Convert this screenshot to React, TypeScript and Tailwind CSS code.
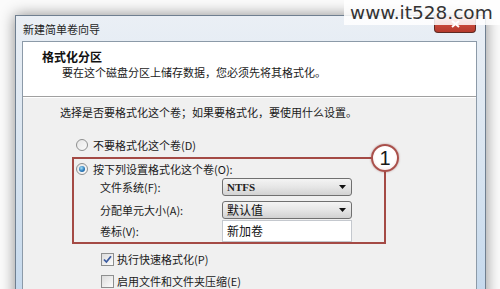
import React from "react";

const cjk = "font-['Noto_Sans_CJK_SC','Liberation_Sans',sans-serif]";

function Radio({ checked }: { checked?: boolean }) {
  return (
    <span className="relative flex h-[12px] w-[12px] shrink-0 items-center justify-center rounded-full border border-[#8e8f8f] bg-gradient-to-br from-[#e6e6e6] to-[#fbfbfb]">
      {checked && (
        <span className="h-[6px] w-[6px] rounded-full bg-[radial-gradient(circle_at_40%_35%,#a9e1f6_0%,#2a7bbd_55%,#1d4f84_100%)]" />
      )}
    </span>
  );
}

function Checkbox({ checked }: { checked?: boolean }) {
  return (
    <span className="flex h-[13px] w-[13px] shrink-0 items-center justify-center border border-[#8e8f8f] bg-gradient-to-br from-[#dcdcdc] to-[#fdfdfd]">
      {checked && (
        <svg width="9" height="9" viewBox="0 0 9 9">
          <path d="M1 4.5 L3.4 7 L8 1.2" fill="none" stroke="#3b5ba0" strokeWidth="1.8" />
        </svg>
      )}
    </span>
  );
}

function Combo({ children, bold }: { children: React.ReactNode; bold?: boolean }) {
  return (
    <div className="flex h-[18px] w-[130px] items-center justify-between rounded-[3px] border border-[#707070] bg-gradient-to-b from-[#f4f4f4] via-[#e6e6e6] to-[#d2d2d2] pl-[4px] pr-[5px]">
      <span
        className={
          bold
            ? "font-['Liberation_Serif',serif] text-[11px] font-bold leading-[14px] text-[#222]"
            : `${cjk} text-[12px] leading-[14px] text-[#111]`
        }
      >
        {children}
      </span>
      <svg width="7" height="4" viewBox="0 0 7 4">
        <path d="M0 0 H7 L3.5 4 Z" fill="#111" />
      </svg>
    </div>
  );
}

export default function App() {
  return (
    <div className="relative h-[289px] w-[500px] overflow-hidden bg-[#fbfbfb]">
      {/* window */}
      <div className="absolute left-[15px] top-[15px] flex h-[300px] w-[471px] flex-col border border-[#6f7f90] bg-gradient-to-b from-[#eaeff5] via-[#d8e4f0] to-[#c2d7ec] pl-[6px] pr-[8px] shadow-[0_0_14px_rgba(0,0,0,0.45)]">
        {/* title bar */}
        <div className={`flex h-[25px] shrink-0 items-center pl-[1px] ${cjk} text-[11px] leading-[14px] text-[#1e1e1e]`}>
          新建简单卷向导
        </div>
        {/* close button */}
        <div className="absolute right-[9px] top-0 flex h-[17px] w-[42px] items-center justify-center rounded-b-[4px] border border-t-0 border-[#5e2a23] bg-gradient-to-b from-[#e8a596] via-[#c8493b] to-[#b63a2c]">
          <svg width="9" height="8" viewBox="0 0 9 8">
            <path d="M1 1 L8 7 M8 1 L1 7" stroke="#fff" strokeWidth="2" />
          </svg>
        </div>
        {/* content */}
        <div className="flex flex-1 flex-col border border-[#8c9aa8] bg-[#f0f0f0]">
          {/* header */}
          <div className="flex h-[55px] shrink-0 flex-col border-b border-[#a0a0a0] bg-white pl-[19px] pt-[7px]">
            <div className={`${cjk} text-[12px] font-bold leading-[16px] text-[#111]`}>格式化分区</div>
            <div className={`${cjk} pl-[20px] text-[11px] leading-[14px] text-[#1a1a1a]`}>
              要在这个磁盘分区上储存数据，您必须先将其格式化。
            </div>
          </div>
          <div className="h-px bg-white" />
          {/* body */}
          <div className={`flex flex-col pl-[37px] pt-[7px] ${cjk} text-[11px] leading-[14px] text-[#1a1a1a]`}>
            <div>选择是否要格式化这个卷；如果要格式化，要使用什么设置。</div>
            <div className="mt-[19px] flex items-center gap-[5px] pl-[16px]">
              <Radio />
              <span>不要格式化这个卷(D)</span>
            </div>
            {/* red box */}
            <div className="relative mt-[5px] ml-[12px] flex h-[87px] w-[314px] flex-col border-2 border-[#a44a45] pl-[2px]">
              <div className="mt-[3px] flex items-center gap-[5px]">
                <Radio checked />
                <span>按下列设置格式化这个卷(O):</span>
              </div>
              <div className="mt-[2px] flex items-center pl-[24px]">
                <span className="w-[122px]">文件系统(F):</span>
                <Combo bold>NTFS</Combo>
              </div>
              <div className="mt-[5px] flex items-center pl-[24px]">
                <span className="w-[122px]">分配单元大小(A):</span>
                <Combo>默认值</Combo>
              </div>
              <div className="mt-[1px] flex items-center pl-[24px]">
                <span className="w-[122px]">卷标(V):</span>
                <div className="flex h-[22px] w-[130px] items-center border border-[#c4c8ce] bg-white pl-[4px] text-[12px] text-[#111]">
                  新加卷
                </div>
              </div>
              {/* callout */}
              <div className="absolute -right-[15px] -top-[15px] flex h-[28px] w-[28px] items-center justify-center rounded-full border-2 border-[#a9504b] bg-[radial-gradient(circle_at_50%_45%,#ffffff_0%,#ffffff_55%,#f3d6d3_100%)] shadow-[0_0_2px_rgba(120,40,40,0.5)]">
                <span className="font-['Liberation_Sans',sans-serif] text-[20px] leading-[20px] text-[#1a1a1a]">1</span>
              </div>
            </div>
            <div className="mt-[8px] flex items-center gap-[3px] pl-[41px]">
              <Checkbox checked />
              <span>执行快速格式化(P)</span>
            </div>
            <div className="mt-[8px] flex items-center gap-[3px] pl-[41px]">
              <Checkbox />
              <span>启用文件和文件夹压缩(E)</span>
            </div>
          </div>
        </div>
      </div>
      {/* watermark */}
      <div className="absolute left-[344px] top-0 flex h-[25px] w-[156px] items-center bg-white/85 pl-[6px]">
        <span className="font-['DejaVu_Sans',sans-serif] text-[18.5px] leading-[20px] text-[#333]">www.it528.com</span>
      </div>
    </div>
  );
}
